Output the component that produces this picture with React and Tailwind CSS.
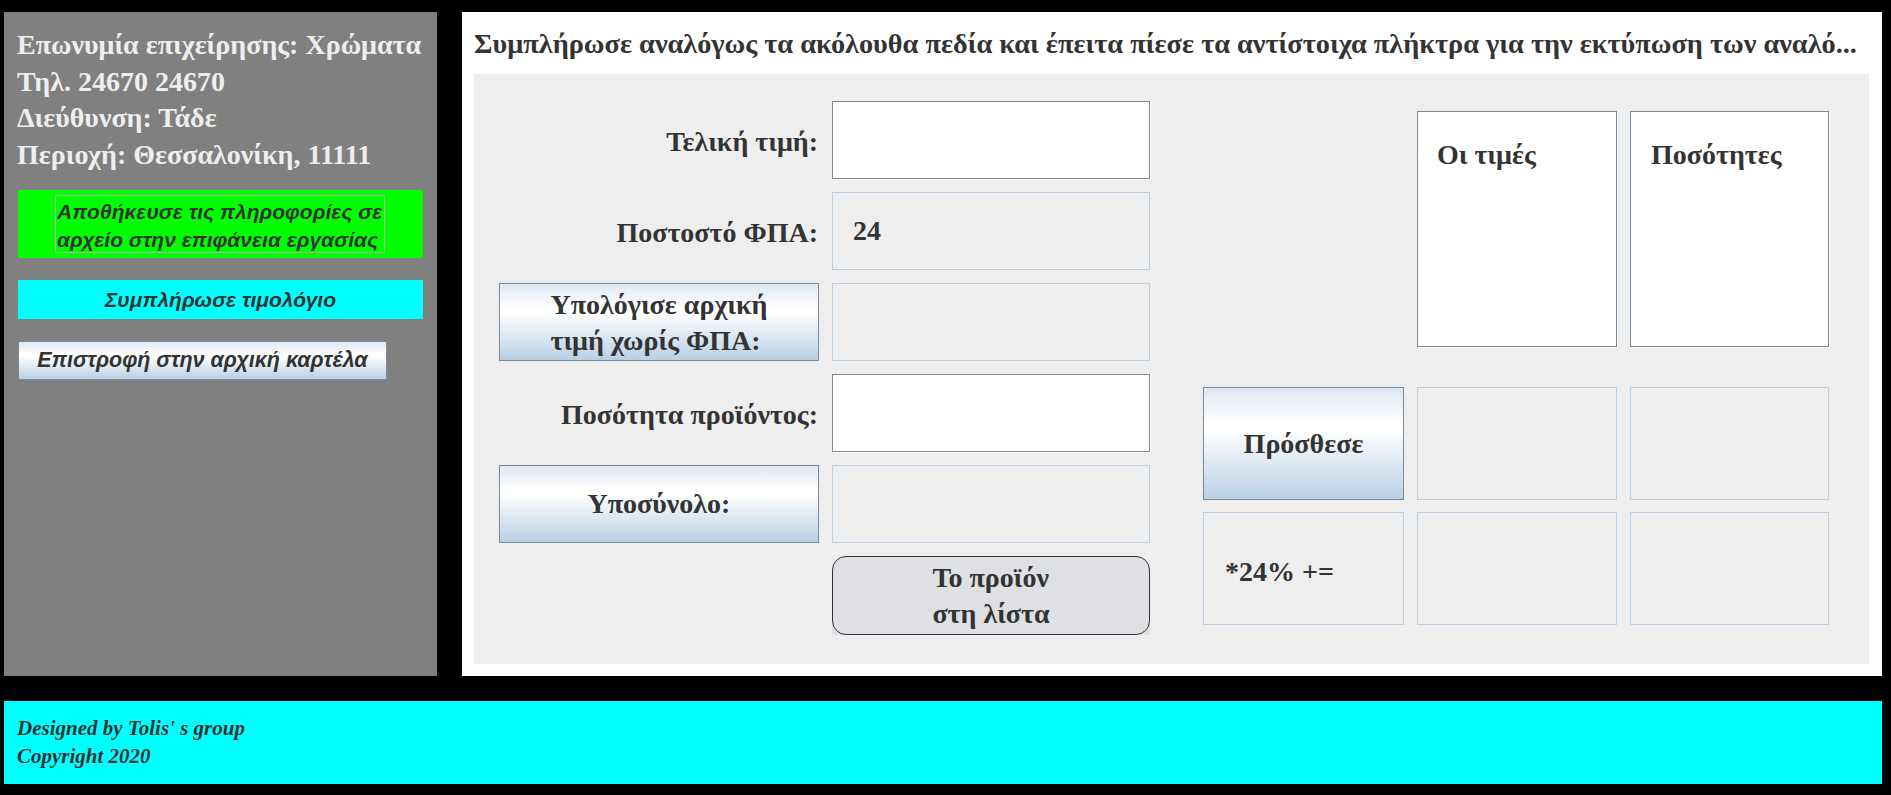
const serif = "font-['Liberation_Serif','Times_New_Roman',serif]";
const sans = "font-['Liberation_Sans',Arial,sans-serif]";

const metalBtn =
  "border border-[#7a8a99] bg-[linear-gradient(to_bottom,#dde8f3_0%,#ffffff_32%,#ffffff_38%,#dbe6f1_70%,#b8cfe5_100%)] flex items-center justify-center text-[#333333] font-bold";

function Field({ children, white }) {
  if (white) {
    return (
      <div className="bg-white border border-[#7a8a99] shadow-[1px_1px_0_#ffffff] h-[78px]" />
    );
  }
  return (
    <div className="border border-[#b8cfe5] h-[78px] flex items-center pl-[20px] text-[28px] font-bold text-[#333333]">
      {children}
    </div>
  );
}

function Label({ children }) {
  return (
    <div className="h-[78px] flex items-center justify-end pr-px pt-[4px] text-[28px] font-bold text-[#333333] whitespace-nowrap">
      {children}
    </div>
  );
}

export default function App() {
  return (
    <div className={`w-[1891px] h-[795px] bg-black pt-[12px] px-[4px] overflow-hidden ${serif}`}>
      <div className="flex gap-[25px]">
        {/* sidebar */}
        <aside className="w-[433px] h-[664px] bg-[#808080] pl-[13px] pt-[15px]">
          <div className="text-[28px] leading-[36.5px] font-bold text-[#eeeeee] whitespace-nowrap">
            <p>Επωνυμία επιχείρησης: Χρώματα</p>
            <p>Τηλ. 24670 24670</p>
            <p>Διεύθυνση: Τάδε</p>
            <p>Περιοχή: Θεσσαλονίκη, 11111</p>
          </div>

          <div className={`mt-[17px] ml-px w-[405px] h-[68px] bg-[#00ff00] pt-[5px] pl-[37px] ${sans}`}>
            <div className="w-[330px] h-[58px] border border-[#a6b0a6] overflow-hidden pl-[1px] pt-[2px] text-[21px] leading-[28px] font-bold italic text-[#333333] whitespace-nowrap">
              <p>Αποθήκευσε τις πληροφορίες σε</p>
              <p>αρχείο στην επιφάνεια εργασίας</p>
            </div>
          </div>

          <div className={`mt-[22px] ml-px w-[405px] h-[39px] bg-[#00ffff] flex items-center justify-center text-[21px] font-bold italic text-[#333333] ${sans}`}>
            Συμπλήρωσε τιμολόγιο
          </div>

          <div className={`mt-[22px] ml-px w-[369px] h-[39px] ${metalBtn} italic text-[21.5px] ${sans}`}>
            Επιστροφή στην αρχική καρτέλα
          </div>
        </aside>

        {/* main panel */}
        <main className="w-[1420px] h-[664px] bg-white pl-[12px]">
          <div className="h-[62px] pt-[17px] text-[28.3px] leading-[30px] font-bold text-[#333333] whitespace-nowrap overflow-hidden">
            Συμπλήρωσε αναλόγως τα ακόλουθα πεδία και έπειτα πίεσε τα αντίστοιχα πλήκτρα για την εκτύπωση των αναλό...
          </div>

          <div className="w-[1395px] h-[590px] bg-[#eeeeee] flex items-start pl-[25px]">
            {/* form grid */}
            <div className="mt-[27px] grid grid-cols-[320px_318px] gap-x-[13px] gap-y-[13px]">
              <Label>Τελική τιμή:</Label>
              <Field white />

              <Label>Ποστοστό ΦΠΑ:</Label>
              <Field>24</Field>

              <div className={`h-[78px] ${metalBtn} text-[28px]`}>
                <div className="text-left leading-[36px] pt-[2px]">
                  <p>Υπολόγισε αρχική</p>
                  <p>τιμή χωρίς ΦΠΑ:</p>
                </div>
              </div>
              <Field />

              <Label>Ποσότητα προϊόντος:</Label>
              <Field white />

              <div className={`h-[78px] ${metalBtn} text-[28px]`}>Υποσύνολο:</div>
              <Field />

              <div />
              <div className="h-[79px] bg-[#dfe0e3] rounded-t-[14px]">
                <div className="h-full rounded-[14px] border border-[#333333] flex items-center justify-center text-[28px] font-bold text-[#333333]">
                  <div className="text-left leading-[36px]">
                    <p>Το προϊόν</p>
                    <p>στη λίστα</p>
                  </div>
                </div>
              </div>
            </div>

            {/* right side */}
            <div className="ml-[53px] mt-[37px] flex flex-col">
              <div className="grid grid-cols-[201px_200px_199px] gap-x-[13px] h-[236px]">
                <div />
                <div className="bg-white border border-[#7a8a99] shadow-[1px_1px_0_#ffffff] pl-[19px] pt-[27px] text-[28px] leading-[32px] font-bold text-[#333333]">
                  Οι τιμές
                </div>
                <div className="bg-white border border-[#7a8a99] shadow-[1px_1px_0_#ffffff] pl-[20px] pt-[27px] text-[28px] leading-[32px] font-bold text-[#333333]">
                  Ποσότητες
                </div>
              </div>

              <div className="mt-[40px] grid grid-cols-[201px_200px_199px] gap-x-[13px] gap-y-[12px] auto-rows-[113px]">
                <div className={`${metalBtn} text-[28px]`}>Πρόσθεσε</div>
                <div className="border border-[#b8cfe5]" />
                <div className="border border-[#b8cfe5]" />

                <div className="border border-[#b8cfe5] flex items-center pl-[21px] pt-[6px] text-[28px] font-bold text-[#333333]">
                  *24% +=
                </div>
                <div className="border border-[#b8cfe5]" />
                <div className="border border-[#b8cfe5]" />
              </div>
            </div>
          </div>
        </main>
      </div>

      {/* footer */}
      <footer className="mt-[25px] w-[1878px] h-[83px] bg-[#00ffff] pl-[13px] pt-[13px] text-[21px] leading-[28px] font-bold italic text-[#333333]">
        <p>Designed by Tolis' s group</p>
        <p>Copyright 2020</p>
      </footer>
    </div>
  );
}
